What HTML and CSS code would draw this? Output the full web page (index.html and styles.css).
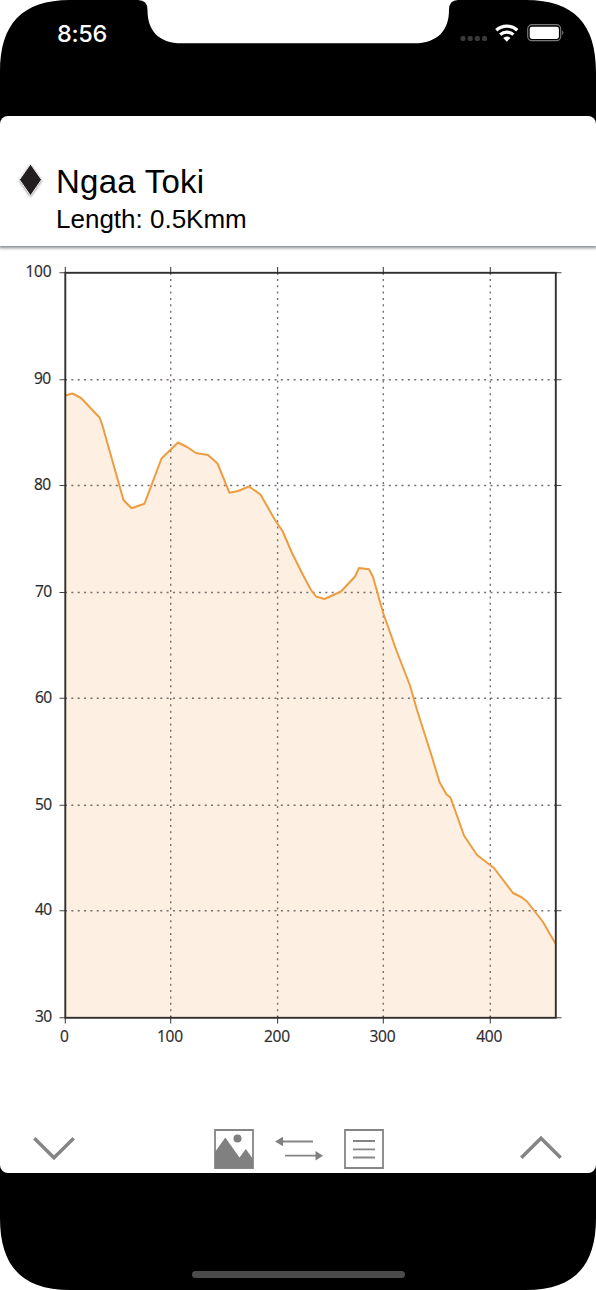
FILE: index.html
```html
<!DOCTYPE html>
<html lang="en">
<head>
<meta charset="utf-8">
<title>Ngaa Toki</title>
<link rel="stylesheet" href="styles.css">
</head>
<body>
<main class="phone">
  <svg class="phone-shape" viewBox="0 0 596 1290" aria-hidden="true">
    <path d="M70 0H138Q147.500 0 147.500 10C147.500 30 158 43.300 182 43.300H414C438 43.300 449 30 449 10Q449 0 458 0H526C574 0 596 24 596 72V1218C596 1266 574 1290 526 1290H70C22 1290 0 1266 0 1218V72C0 24 22 0 70 0Z"/>
  </svg>
  <header class="status">
    <span class="clock">8:56</span>
    <svg class="status-icons" width="106" height="24" viewBox="0 0 106 24" aria-hidden="true">
      <g fill="#3a3a3a"><rect x=".5" y="14" width="5" height="5" rx="1.800"/><rect x="7.700" y="14" width="5" height="5" rx="1.800"/><rect x="14.800" y="14" width="5" height="5" rx="1.800"/><rect x="22" y="14" width="5" height="5" rx="1.800"/></g>
      <g fill="none" stroke="#fff" stroke-width="3.300"><path d="M36.300 8.200a15.500 15.500 0 0 1 21 0"/><path d="M40.200 12.600a9.800 9.800 0 0 1 13.200 0"/></g>
      <path fill="#fff" d="M43.200 15.900q3.600-3 7.200 0l-3.600 3.900z"/>
      <rect x="67.700" y="2.700" width="33" height="16" rx="4.200" fill="none" stroke="#777" stroke-width="1.200"/>
      <rect x="69.700" y="4.700" width="29.200" height="12.200" rx="2.300" fill="#fff"/>
      <path fill="#888" d="M102.300 8.300q2.200 2.400 0 5z"/>
    </svg>
  </header>
  <section class="card">
    <div class="heading">
      <svg class="diamond" width="32" height="42" viewBox="0 0 32 42" aria-hidden="true"><path d="M15.500 4L26.500 19.700L15.500 35.700L4.500 19.700Z"/></svg>
      <div>
        <h1 class="title">Ngaa Toki</h1>
        <p class="length">Length: 0.5Kmm</p>
      </div>
    </div>
    <svg class="chart" width="596" height="810" viewBox="0 250 596 810" role="img">
      <path class="area" d="M65 395.500L72.500 393.500L81 398L99.500 417.500L102 424L123.500 500L131.500 508.300L144.500 503.700L161.500 458.500L178 442.500L187 447L196 453L208 455L217.500 463.500L229.500 492.800L238 491L249 486.500L260.500 494.500L275 520L282.500 531L292 553L303 575L311 590L316 596.500L324.500 599L341 591.500L355 576.500L359 568L369 569.300L373 577L383.500 614L397 652L410 685.500L417 710L432 757L439.500 782L446.500 794.500L450.500 797.500L464 835.500L477 855L494 868L513 893L522 897.500L527 901.500L543 922L549 932.500L555.500 943.500V1017.500H65Z"/>
      <g class="grid">
        <path d="M65 379.700H556M65 485.500H556M65 592.500H556M65 698.300H556M65 805.300H556M65 910.700H556"/>
        <path d="M170.700 1017.500V272.500M277.600 1017.500V272.500M383.300 1017.500V272.500M490.300 1017.500V272.500"/>
      </g>
      <path class="line" d="M65 395.500L72.500 393.500L81 398L99.500 417.500L102 424L123.500 500L131.500 508.300L144.500 503.700L161.500 458.500L178 442.500L187 447L196 453L208 455L217.500 463.500L229.500 492.800L238 491L249 486.500L260.500 494.500L275 520L282.500 531L292 553L303 575L311 590L316 596.500L324.500 599L341 591.500L355 576.500L359 568L369 569.300L373 577L383.500 614L397 652L410 685.500L417 710L432 757L439.500 782L446.500 794.500L450.500 797.500L464 835.500L477 855L494 868L513 893L522 897.500L527 901.500L543 922L549 932.500L555.500 943.500"/>
      <path class="ticks" d="M59.500 272.700H65M556 272.700H561.500M59.500 379.700H65M556 379.700H561.500M59.500 485.500H65M556 485.500H561.500M59.500 592.500H65M556 592.500H561.500M59.500 698.300H65M556 698.300H561.500M59.500 805.300H65M556 805.300H561.500M59.500 910.700H65M556 910.700H561.500M59.500 1017.700H65M556 1017.700H561.500M65.300 267V272M65.300 1018V1023.500M170.700 267V274.500M170.700 1016V1023.500M277.600 267V274.500M277.600 1016V1023.500M383.300 267V274.500M383.300 1016V1023.500M490.300 267V274.500M490.300 1016V1023.500"/>
      <rect class="frame" x="65.300" y="272.800" width="490.500" height="745"/>
      <g class="labels ylabels">
        <text x="51.500" y="276.700" textLength="26">100</text>
        <text x="51" y="384.300" textLength="17">90</text>
        <text x="51" y="490.300" textLength="17">80</text>
        <text x="52" y="597.200" textLength="17">70</text>
        <text x="52" y="702.700" textLength="17">60</text>
        <text x="52" y="809.700" textLength="17">50</text>
        <text x="52" y="915.300" textLength="17">40</text>
        <text x="52" y="1021.700" textLength="17">30</text>
      </g>
      <g class="labels xlabels">
        <text x="64.500" y="1041.500" textLength="8.600">0</text>
        <text x="170" y="1041.500" textLength="26">100</text>
        <text x="277" y="1041.500" textLength="26">200</text>
        <text x="382.500" y="1041.500" textLength="26">300</text>
        <text x="489.300" y="1041.500" textLength="26">400</text>
      </g>
    </svg>
    <nav class="toolbar">
      <svg width="42" height="40" viewBox="0 0 42 40" class="chevron"><path d="M1.300 9.300L21 28.800L40.700 9.300"/></svg>
      <div class="tools">
        <svg width="40" height="40" viewBox="0 0 40 40"><path class="thin" d="M1 1H39V39H1Z"/><path class="solid" d="M1 23L11.300 8.500L25.500 28.500L31.800 20L39 30V39H1Z"/><circle class="solid" cx="23.500" cy="9.500" r="4"/></svg>
        <svg width="48" height="40" viewBox="0 0 48 40"><path class="thin" d="M5 12.500H38M10 26.700H44"/><path class="solid" d="M0 12.500L8 7.800V17.200ZM48 26.700L40.500 22V31.400Z"/></svg>
        <svg width="40" height="40" viewBox="0 0 40 40"><path class="thin" d="M1 1H39V39H1ZM9 12H31M9 20.300H31M9 28.500H31"/></svg>
      </div>
      <svg width="42" height="40" viewBox="0 0 42 40" class="chevron"><path d="M1.300 28.800L21 9.300L40.700 28.800"/></svg>
    </nav>
  </section>
  <footer class="home"><div class="home-bar"></div></footer>
</main>
</body>
</html>
```

FILE: styles.css
```css
* { box-sizing: border-box; }
body { margin: 0; background: #fff; font-family: "Liberation Sans", Arial, sans-serif; color: #000; }
svg { display: block; flex: none; }
.phone { position: relative; isolation: isolate; width: 596px; height: 1290px; display: flex; flex-direction: column; overflow: hidden; }
.phone-shape { position: absolute; inset: 0; width: 596px; height: 1290px; z-index: -1; }
.status { height: 116.300px; flex: none; display: flex; justify-content: space-between; align-items: flex-start; padding: 22px 30px 0 57px; color: #fff; }
.clock { font: 500 23.500px/24px Inter, sans-serif; letter-spacing: -.3px; }
.card { height: 1057.200px; flex: none; background: #fff; border-radius: 8px; overflow: hidden; display: flex; flex-direction: column; }
.heading { height: 129.700px; flex: none; display: flex; padding: 44px 0 0 15px; box-shadow: 0 1px 3px 1px #858a8f; }
.diamond { margin-right: 9px; }
.diamond path { fill: #231f20; stroke: #eee; stroke-width: 1; filter: drop-shadow(.5px 1.500px 1.200px #999); }
.title { margin: 0; padding-top: 1px; font-weight: 400; font-size: 33px; line-height: 42px; letter-spacing: .25px; }
.length { margin: -1px 0 0; font-size: 26px; line-height: 34px; }
.chart { margin-top: 4px; }
.area { fill: #fdefe2; }
.line { fill: none; stroke: #ed9d3f; stroke-width: 2; stroke-linejoin: round; }
.grid path { fill: none; stroke: #776f6c; stroke-width: 1.400; stroke-dasharray: 2 4.350; }
.ticks { stroke: #444; stroke-width: 1.100; }
.frame { fill: none; stroke: #302e2e; stroke-width: 1.900; }
.labels { font: 15.500px "Open Sans", sans-serif; fill: #2a2a2a; stroke: #2a2a2a; stroke-width: .2; }
.ylabels { text-anchor: end; }
.xlabels { text-anchor: middle; }
.toolbar { height: 44px; margin-top: 69.300px; padding: 0 34px 0 33px; display: flex; justify-content: space-between; }
.tools { display: flex; gap: 21px; margin: 0 -1px 0 1px; }
.chevron path { fill: none; stroke: #858585; stroke-width: 3.500; }
.thin { fill: none; stroke: #858585; stroke-width: 1.800; }
.solid { fill: #808080; }
.home { flex: 1; display: flex; justify-content: center; align-items: flex-end; padding-bottom: 12px; }
.home-bar { width: 213px; height: 7px; border-radius: 4px; background: #4b4b4b; }
```
